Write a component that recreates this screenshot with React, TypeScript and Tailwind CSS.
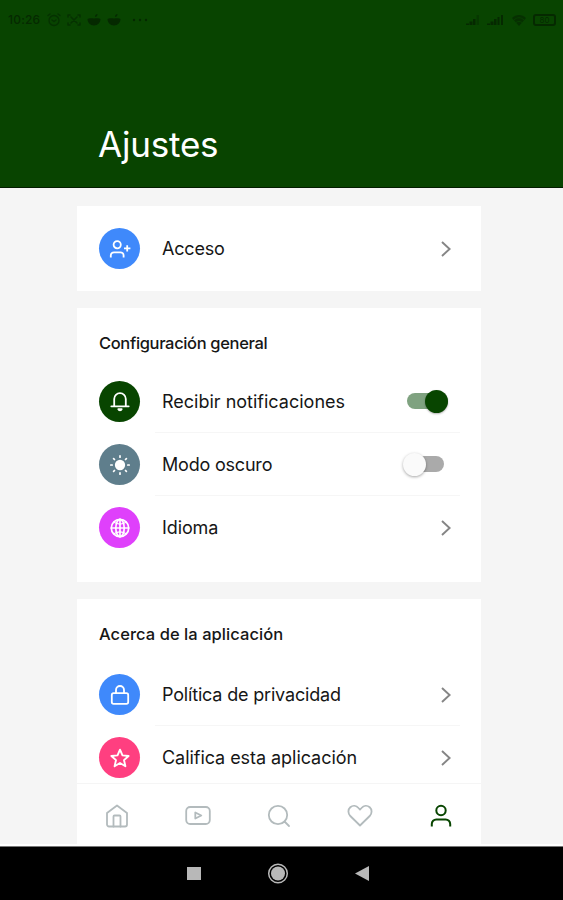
import type { ReactNode } from "react";
import clsx from "clsx";

type RowItem = {
  label: string;
  color: string;
  icon: ReactNode;
  tracking: string;
  control?: "chevron" | "on" | "off";
};

const line = {
  fill: "none",
  stroke: "currentColor",
  strokeLinecap: "round" as const,
  strokeLinejoin: "round" as const,
};

// Icons
const UserPlusIcon = () => (
  <svg width="22" height="20" viewBox="0 0 22 20" strokeWidth="1.8" {...line} strokeLinecap="butt">
    <circle cx="8.2" cy="5.7" r="3.6" />
    <path d="M1.8 18.5v-2a3.2 3.2 0 0 1 3.2-3.2h6.4a3.2 3.2 0 0 1 3.2 3.2v2M18.2 6.200v6.400M15 9.400h6.400" />
  </svg>
);

const BellIcon = () => (
  <svg width="20" height="22" viewBox="0 0 20 22" strokeWidth="1.8" {...line}>
    <path d="M4.200 15V8a5.800 5.800 0 0 1 11.600 0V15M1.300 15.300h17.400" />
    <path d="M8.300 18.200a1.800 1.800 0 0 0 3.400 0z" fill="currentColor" />
  </svg>
);

const SunIcon = () => (
  <svg width="22" height="22" viewBox="0 0 22 22" strokeWidth="1.7" {...line}>
    <circle cx="11" cy="11" r="4.300" fill="currentColor" />
    <path d="M11 1.800v1.400M11 18.800v1.400M1.800 11h1.400M18.800 11h1.400M4.600 4.600l.9.9M16.500 16.500l.9.9M4.600 17.400l.9-.9M16.500 5.500l.9-.9" />
  </svg>
);

const GlobeIcon = () => (
  <svg width="22" height="22" viewBox="0 0 22 22" strokeWidth="1.700" {...line}>
    <circle cx="11" cy="11" r="8.700" />
    <ellipse cx="11" cy="11" rx="4.200" ry="8.700" />
    <path d="M11 2.300v17.400M2.300 11h17.400" />
    <path d="M4.800 5.300c3.600 2 8.800 2 12.400 0M4.800 16.700c3.600-2 8.800-2 12.400 0" strokeWidth="1.200" />
  </svg>
);

const LockIcon = () => (
  <svg width="20" height="22" viewBox="0 0 20 22" strokeWidth="1.800" {...line}>
    <rect x="1.800" y="9.200" width="16.400" height="10.600" rx="1.800" />
    <path d="M6 9V6a4 4 0 0 1 8 0V9" />
  </svg>
);

const StarIcon = () => (
  <svg width="22" height="22" viewBox="0 0 22 22" strokeWidth="1.900" {...line}>
    <path d="M11 2.700l2.500 5.700 6.100.600-4.600 4.100 1.400 6.100-5.400-3.200-5.400 3.200L7 13.100 2.400 9l6.100-.600z" />
  </svg>
);

const Chevron = () => (
  <svg className="mr-2 mt-0.5" width="12" height="18" viewBox="0 0 12 18" stroke="#858585" strokeWidth="1.900" fill="none">
    <path d="M2 2l7.600 7L2 16" />
  </svg>
);

const Toggle = ({ on }: { on: boolean }) => (
  <div
    className={clsx(
      "flex h-4 items-center rounded-full",
      on ? "mr-3 w-[41px] justify-end bg-[#7fa280]" : "mr-4 w-[38px] bg-[#aaaaaa]"
    )}
  >
    <span
      className={clsx(
        "h-[23px] w-[23px] shrink-0 rounded-full",
        on ? "bg-[#084500] shadow-[0_1px_2px_rgba(0,0,0,0.3)]" : "-ml-[3px] bg-[#fafafa] shadow-[0_1px_3px_rgba(0,0,0,0.35)]"
      )}
    />
  </div>
);

const Row = ({ item, last }: { item: RowItem; last?: boolean }) => (
  <div className="flex h-[63px] items-center pl-[22px] pr-[21px]">
    <span className={clsx("flex h-[41px] w-[41px] shrink-0 items-center justify-center rounded-full text-white", item.color)}>
      {item.icon}
    </span>
    <div className={clsx("ml-[15px] flex h-full flex-1 items-center justify-between border-b pl-[7px]", last ? "border-transparent" : "border-[#f6f6f6]")}>
      <span className={clsx("whitespace-nowrap text-[18px]", item.tracking)}>{item.label}</span>
      {item.control === "on" && <Toggle on />}
      {item.control === "off" && <Toggle on={false} />}
      {!item.control && <Chevron />}
    </div>
  </div>
);

const access: RowItem = { label: "Acceso", color: "bg-[#3f89fb]", icon: <UserPlusIcon />, tracking: "tracking-[-0.2px]" };

const general: RowItem[] = [
  { label: "Recibir notificaciones", color: "bg-[#084500]", icon: <BellIcon />, tracking: "tracking-[0px]", control: "on" },
  { label: "Modo oscuro", color: "bg-[#5f7e8c]", icon: <SunIcon />, tracking: "tracking-[-0.2px]", control: "off" },
  { label: "Idioma", color: "bg-[#df40fb]", icon: <GlobeIcon />, tracking: "tracking-[-0.1px]" },
];

const about: RowItem[] = [
  { label: "Política de privacidad", color: "bg-[#3f89fb]", icon: <LockIcon />, tracking: "tracking-[-0.18px]" },
  { label: "Califica esta aplicación", color: "bg-[#ff3f80]", icon: <StarIcon />, tracking: "tracking-[-0.05px]" },
];

const StatusBar = () => (
  <div className="flex h-10 items-center justify-between pl-2 pr-[7px] text-[#052900]">
    <div className="flex items-center">
      <span className="w-[33px] text-[12px] font-medium tracking-[0.2px]">10:26</span>
      <svg className="ml-1.5 opacity-70" width="14" height="14" viewBox="0 0 14 14" strokeWidth="1.300" {...line}>
        <circle cx="7" cy="7.500" r="5" />
        <path d="M5 7l2 1.500L9 7M1 2.500L3 1M13 2.500L11 1" />
      </svg>
      <svg className="ml-1.5 opacity-70" width="14" height="14" viewBox="0 0 14 14" strokeWidth="1.500" {...line}>
        <path d="M1 4V2h2M11 2h2v2M1 10v2h2M11 12h2v-2M4 4l6 6M10 4l-6 6" />
      </svg>
      {[0, 1].map((n) => (
        <svg key={n} className="ml-1.5" width="14" height="14" viewBox="0 0 14 14" fill="currentColor">
          <path d="M.5 6c1-1 4-1 6.500-.5C9.500 5 12.500 5 13.500 6c0 3-2.500 6.500-6.500 6.500S.5 9 .5 6zM8 4c0-2 1-3 2.500-3C10.500 3 9.500 4 8 4z" />
        </svg>
      ))}
      <svg className="ml-[11px]" width="16" height="4" viewBox="0 0 16 4" fill="currentColor">
        <circle cx="2" cy="2" r="1.200" />
        <circle cx="8" cy="2" r="1.200" />
        <circle cx="14" cy="2" r="1.200" />
      </svg>
    </div>
    <div className="flex items-center">
      <svg width="14" height="12" viewBox="0 0 14 12" fill="currentColor">
        <path d="M0 11V9.500h3V11zM3.500 11V7.500h3V11zM7 11V5h2.500v6z" />
        <path d="M10.500 11V1h2.500v10z" opacity=".4" />
      </svg>
      <svg className="ml-[7px]" width="17" height="12" viewBox="0 0 17 12" fill="currentColor">
        <path d="M0 11V9.500h3V11zM3.500 11V7.500h3V11zM7 11V5h2.500v6zM10.500 11V3h2v8zM14 11V1h2v10z" />
      </svg>
      <svg className="ml-[7px]" width="16" height="13" viewBox="0 0 16 13">
        <path d="M1 4c4-4 10-4 14 0L8 12z" fill="currentColor" opacity=".75" />
        <path d="M3 6c3-3 7-3 10 0M5 8.500c2-1.500 4-1.500 6 0" fill="none" stroke="#084000" />
      </svg>
      <span className="ml-1.5 flex h-3 w-[23px] items-center justify-center rounded-[3px] border-2 border-[#052900] text-[8px]">80</span>
    </div>
  </div>
);

const BottomNav = () => (
  <nav className="flex h-[61px] shrink-0 items-center justify-between border-t border-[#f5f5f5] bg-white px-7 pt-1 text-[#b3bbbd]">
    <svg width="24" height="24" viewBox="0 0 24 24" strokeWidth="1.800" {...line}>
      <path d="M2 9l10-7.500L22 9v11.500a2 2 0 0 1-2 2H4a2 2 0 0 1-2-2z" />
      <path d="M8.500 22.500V12.500a1 1 0 0 1 1-1h5a1 1 0 0 1 1 1v10" />
    </svg>
    <svg width="26" height="24" viewBox="0 0 26 24" strokeWidth="1.800" {...line}>
      <rect x="1.200" y="3" width="23.600" height="17" rx="4" />
      <path d="M10.300 8.500v6l6-3z" />
    </svg>
    <svg width="24" height="24" viewBox="0 0 24 24" strokeWidth="1.800" {...line}>
      <circle cx="11" cy="11" r="9.200" />
      <path d="M17.500 17.500l4.500 4.500" />
    </svg>
    <svg width="26" height="24" viewBox="0 0 26 24" strokeWidth="1.800" {...line}>
      <path d="M13 21.500L3.300 12C.8 9.500.8 5.500 3.300 3.300c2.500-2.200 6-1.800 8.200.7L13 5.600 14.500 4c2.200-2.500 5.700-2.900 8.200-.7 2.500 2.200 2.500 6.200 0 8.700z" />
    </svg>
    <svg className="text-[#084500]" width="24" height="24" viewBox="0 0 24 24" strokeWidth="2" {...line} strokeLinecap="butt">
      <circle cx="12" cy="6.500" r="4.700" />
      <path d="M2.800 22.500V20a4.500 4.500 0 0 1 4.500-4.500h9.400a4.500 4.500 0 0 1 4.500 4.500v2.500" />
    </svg>
  </nav>
);

const SystemNav = () => (
  <div className="flex h-14 shrink-0 items-center justify-center gap-[66px] border-t-2 border-white bg-black pr-[7px] text-[#b8b8b8] shadow-[inset_0_1px_0_#777777]">
    <svg width="14" height="22" viewBox="0 0 14 22" fill="currentColor">
      <path d="M0 5h14v13H0z" />
    </svg>
    <svg width="22" height="22" viewBox="0 0 22 22">
      <circle cx="11" cy="11.500" r="9.300" fill="none" stroke="currentColor" strokeWidth="1.500" />
      <circle cx="11" cy="11.500" r="7" fill="currentColor" />
    </svg>
    <svg width="14" height="22" viewBox="0 0 14 22" fill="currentColor">
      <path d="M0 11.500l14-7.500v15z" />
    </svg>
  </div>
);

const App = () => {
  return (
    <div className="flex h-[900px] w-[563px] flex-col overflow-hidden bg-[#f5f5f5] font-['Inter',sans-serif] text-[#161616]">
      <header className="h-[188px] shrink-0 border-b border-[#031c00] bg-[#084400]">
        <StatusBar />
        <h1 className="ml-[98px] mt-[80px] text-[35px] leading-[48px] tracking-[-0.2px] text-white">Ajustes</h1>
      </header>

      <main className="ml-[77px] flex min-h-0 w-[404px] flex-1 flex-col overflow-hidden pt-[18px]">
        <section className="h-[85px] shrink-0 bg-white pt-[11px]">
          <Row item={access} last />
        </section>

        <section className="mt-[17px] h-[274px] shrink-0 bg-white pt-6">
          <h2 className="ml-[22px] h-[38px] text-[16.5px] font-medium leading-[22px] tracking-[-0.35px]">Configuración general</h2>
          {general.map((item, i) => (
            <Row key={item.label} item={item} last={i === general.length - 1} />
          ))}
        </section>

        <section className="mt-[17px] h-[184px] shrink-0 overflow-hidden bg-white pt-6">
          <h2 className="ml-[22px] h-10 text-[16.5px] font-medium leading-[22px] tracking-[0.05px]">Acerca de la aplicación</h2>
          {about.map((item, i) => (
            <Row key={item.label} item={item} last={i === about.length - 1} />
          ))}
        </section>
        <BottomNav />
      </main>
      <SystemNav />
    </div>
  );
};

export default App;
